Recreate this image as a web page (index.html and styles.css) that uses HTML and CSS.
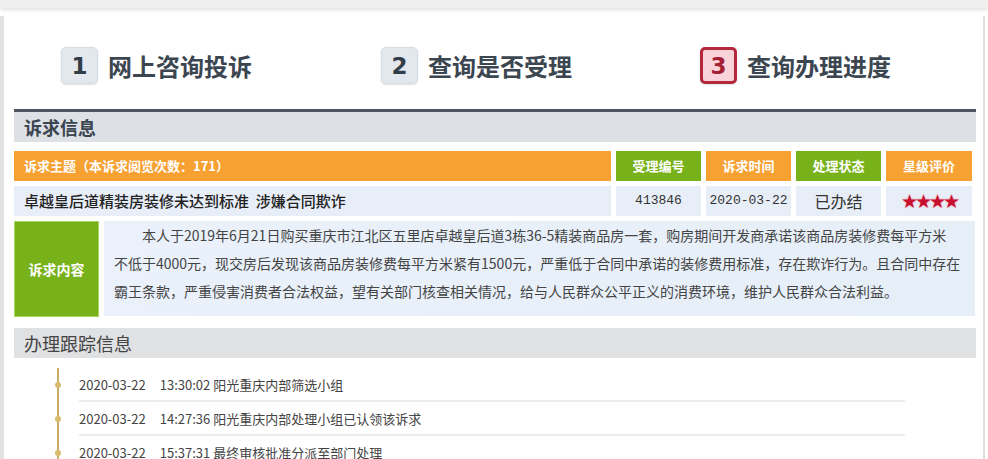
FILE: index.html
```html
<!DOCTYPE html>
<html lang="zh-CN">
<head>
<meta charset="utf-8">
<title>查询办理进度</title>
<link rel="stylesheet" href="styles.css">
</head>
<body>
<div class="topbar"></div>
<div class="frame">
  <div class="steps">
    <div class="step"><span class="badge">1</span><span class="step-text">网上咨询投诉</span></div>
    <div class="step"><span class="badge">2</span><span class="step-text">查询是否受理</span></div>
    <div class="step"><span class="badge badge-active">3</span><span class="step-text">查询办理进度</span></div>
  </div>
  <div class="rule"></div>
  <div class="sec-head sec-bold">诉求信息</div>

  <div class="grid">
    <div class="hcell orange left">诉求主题（本诉求阅览次数：171）</div>
    <div class="hcell green">受理编号</div>
    <div class="hcell orange">诉求时间</div>
    <div class="hcell green">处理状态</div>
    <div class="hcell orange">星级评价</div>

    <div class="dcell left title">卓越皇后道精装房装修未达到标准&nbsp;&nbsp;涉嫌合同欺诈</div>
    <div class="dcell mono">413846</div>
    <div class="dcell mono">2020-03-22</div>
    <div class="dcell status">已办结</div>
    <div class="dcell stars">★★★★</div>
  </div>

  <div class="content-row">
    <div class="content-label">诉求内容</div>
    <div class="content-text">
      <p>本人于2019年6月21日购买重庆市江北区五里店卓越皇后道3栋36-5精装商品房一套，购房期间开发商承诺该商品房装修费每平方米<br>不低于4000元，现交房后发现该商品房装修费每平方米紧有1500元，严重低于合同中承诺的装修费用标准，存在欺诈行为。且合同中存在<br>霸王条款，严重侵害消费者合法权益，望有关部门核查相关情况，给与人民群众公平正义的消费环境，维护人民群众合法利益。</p>
    </div>
  </div>

  <div class="sec-head sec-light">办理跟踪信息</div>
  <ul class="timeline">
    <li><span class="date">2020-03-22</span>13:30:02 阳光重庆内部筛选小组</li>
    <li><span class="date">2020-03-22</span>14:27:36 阳光重庆内部处理小组已认领该诉求</li>
    <li><span class="date">2020-03-22</span>15:37:31 最终审核批准分派至部门处理</li>
  </ul>
</div>
</body>
</html>
```

FILE: styles.css
```css
* { box-sizing: border-box; }
html, body { margin: 0; padding: 0; background: #fff; overflow: hidden; }
body {
  font-family: "Noto Sans CJK SC", "Noto Sans", sans-serif;
  color: #333;
  height: 459px;
}
.topbar {
  height: 8px;
  background: #efefef;
  box-shadow: 0 2px 4px rgba(0,0,0,0.12);
}
.frame {
  margin-top: 8px;
  width: 985px;
  border-left: 4px solid #e2e2e2;
  border-right: 2px solid #dedede;
  padding: 0 7px 0 10px;
  height: 460px;
}
.steps {
  display: flex;
  padding: 31px 0 25px 47px;
  height: 93px;
}
.step {
  flex: 0 0 auto;
  display: flex;
  align-items: center;
  gap: 10px;
}
.step:nth-child(1) { width: 320px; }
.step:nth-child(2) { width: 319px; }
.badge {
  width: 37px;
  height: 37px;
  border-radius: 5px;
  background: #e3e8ee;
  border: 1px solid #d6dce3;
  box-shadow: 0 1px 2px rgba(0,0,0,0.12);
  display: flex;
  align-items: center;
  justify-content: center;
  font-family: "DejaVu Sans", sans-serif;
  font-weight: bold;
  font-size: 23px;
  color: #333d47;
}
.badge-active {
  background: #f8d3da;
  border: 3px solid #b2293b;
  color: #a41f33;
}
.step-text {
  font-size: 24px;
  font-weight: bold;
  color: #3c4650;
}
.rule {
  height: 3px;
  background: #4b555f;
}
.sec-head {
  height: 30px;
  line-height: 30px;
  padding-left: 10px;
  font-size: 18px;
}
.sec-bold {
  background: #dde1e5;
  color: #3a4550;
  font-weight: bold;
}
.sec-light {
  background: #dfe1e3;
  color: #444;
  margin-top: 11px;
}
.grid {
  display: grid;
  grid-template-columns: 597px 85px 85px 85px 86px;
  column-gap: 5px;
  row-gap: 5px;
  margin-top: 9px;
}
.hcell {
  height: 30px;
  line-height: 30px;
  color: #fff;
  font-size: 13px;
  font-weight: bold;
  text-align: center;
}
.orange { background: #f7a133; }
.green { background: #78b21b; }
.dcell {
  height: 30px;
  line-height: 30px;
  background: #e8eef7;
  text-align: center;
  font-size: 13px;
  color: #333;
}
.hcell.left, .dcell.left { text-align: left; padding-left: 10px; }
.title { font-size: 15px; color: #222; font-weight: 500; }
.mono { font-family: "Liberation Mono", monospace; font-size: 13px; color: #333; }
.status { font-size: 16px; color: #333; }
.stars {
  font-family: "DejaVu Sans", sans-serif;
  font-size: 19px;
  color: #c8102e;
  letter-spacing: -3px;
  text-shadow: 0 0 2px rgba(230,80,110,0.6);
}
.content-row {
  display: flex;
  gap: 5px;
  margin-top: 5px;
}
.content-label {
  width: 85px;
  height: 96px;
  background: #78b21b;
  color: #fff;
  font-weight: bold;
  font-size: 14px;
  display: flex;
  align-items: center;
  justify-content: center;
  border: 1px solid #a8d860;
}
.content-text {
  width: 871px;
  height: 95px;
  background: linear-gradient(90deg, #eaf1fa, #e6eef8);
  padding: 0 10px;
}
.content-text p {
  margin: 0;
  font-size: 14px;
  line-height: 28px;
  text-indent: 2em;
  color: #444;
  white-space: nowrap;
}
.timeline {
  list-style: none;
  margin: 10px 0 0 43px;
  padding: 0 0 0 20px;
  border-left: 2px solid #c9ad63;
  width: 848px;
}
.timeline li {
  position: relative;
  height: 34px;
  line-height: 33px;
  font-size: 13px;
  color: #444;
  border-bottom: 2px solid #ececec;
}
.timeline li::before {
  content: "";
  position: absolute;
  left: -24px;
  top: 14px;
  width: 6px;
  height: 6px;
  border-radius: 50%;
  background: #d7bb6a;
}
.date { margin-right: 14px; }
```
